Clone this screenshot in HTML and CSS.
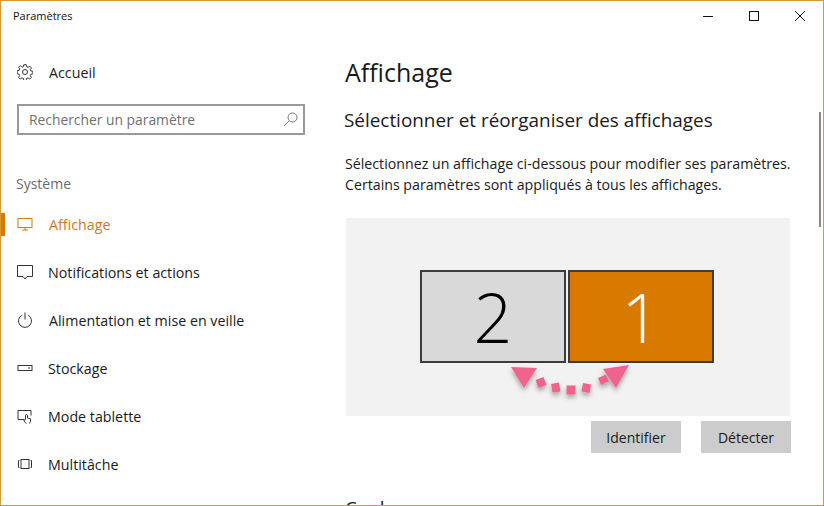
FILE: index.html
```html
<!DOCTYPE html>
<html lang="fr">
<head>
  <meta charset="UTF-8">
  <title>Paramètres</title>
  <meta name="viewport" content="width=device-width,initial-scale=1">
  <link rel="stylesheet" href="styles.css">
</head>
<body>
  <div class="window">
    <div class="titlebar">
      <span class="app-title">Paramètres</span>
      <div class="win-btns">
        <span class="win-btn"><svg width="12" height="12" viewBox="0 0 12 12"><path d="M1 6.500h10" stroke="#111" fill="none"/></svg></span>
        <span class="win-btn"><svg width="12" height="12" viewBox="0 0 12 12"><rect x="1.500" y="1.500" width="9" height="9" stroke="#111" fill="none"/></svg></span>
        <span class="win-btn"><svg width="12" height="12" viewBox="0 0 12 12"><path d="M1 1l10 10M11 1L1 11" stroke="#111" fill="none"/></svg></span>
      </div>
    </div>
    <div class="content">
      <nav class="sidebar">
        <div class="nav-item home">
          <svg class="nav-icon" width="16" height="16" viewBox="0 0 16 16" fill="none" stroke="#333"><circle cx="8" cy="8" r="2.500"/><path d="M6.800.7h2.400l.4 2 1.400.6 1.700-1.100 1.700 1.700-1.100 1.700.6 1.400 2 .4v2.400l-2 .4-.6 1.400 1.100 1.700-1.700 1.700-1.700-1.100-1.400.6-.4 2H6.800l-.4-2-1.400-.6-1.700 1.100-1.700-1.700 1.100-1.700-.6-1.400-2-.4V6.800l2-.4.6-1.400-1.100-1.700 1.700-1.700L5 3.300l1.400-.6z"/></svg>
          <span>Accueil</span>
        </div>
        <div class="search">
          <span>Rechercher un paramètre</span>
          <svg width="15" height="15" viewBox="0 0 15 15" fill="none" stroke="#777"><circle cx="9.500" cy="5.500" r="4.500"/><path d="M6.200 8.800L1 14"/></svg>
        </div>
        <div class="nav-group">Système</div>
        <div class="nav-item active">
          <svg class="nav-icon" width="16" height="16" viewBox="0 0 16 16" fill="none" stroke="#d87a00"><rect x="1" y="2.500" width="14" height="9"/><path d="M8 11.500V14M5 14h6"/></svg>
          <span>Affichage</span>
        </div>
        <div class="nav-item">
          <svg class="nav-icon" width="16" height="16" viewBox="0 0 16 16" fill="none" stroke="#333"><path d="M.5 1.500h15v11h-5.500L8 15l-2-2.500H.5z"/></svg>
          <span class="tight">Notifications et actions</span>
        </div>
        <div class="nav-item">
          <svg class="nav-icon" width="16" height="16" viewBox="0 0 16 16" fill="none" stroke="#333"><path d="M4.800 3.200a6.500 6.500 0 1 0 6.400 0"/><path d="M8 .5v7"/></svg>
          <span>Alimentation et mise en veille</span>
        </div>
        <div class="nav-item">
          <svg class="nav-icon" width="16" height="16" viewBox="0 0 16 16" fill="none" stroke="#333"><rect x="1" y="5.500" width="14" height="5"/><path d="M11 8h2"/></svg>
          <span class="tight">Stockage</span>
        </div>
        <div class="nav-item">
          <svg class="nav-icon" width="16" height="16" viewBox="0 0 16 16" fill="none" stroke="#333"><path d="M7 11.500H1v-9h13v5"/><path d="M9.500 15.500c-1.500-1-2.500-2-2.500-3.500l1.500-.5V7.500a1 1 0 0 1 2 0V10l3 .8v2.500l-1 2.200"/></svg>
          <span class="tight">Mode tablette</span>
        </div>
        <div class="nav-item">
          <svg class="nav-icon" width="16" height="16" viewBox="0 0 16 16" fill="none" stroke="#333"><rect x="4" y="3.500" width="8" height="9"/><path d="M2.500 4.500h-1v7h1M13.500 4.500h1v7h-1"/></svg>
          <span class="tight">Multitâche</span>
        </div>
      </nav>
      <main class="main">
        <h1>Affichage</h1>
        <h2>Sélectionner et réorganiser des affichages</h2>
        <p class="intro">Sélectionnez un affichage ci-dessous pour modifier ses paramètres.<br>Certains paramètres sont appliqués à tous les affichages.</p>
        <div class="canvas">
          <div class="monitor grey">2</div>
          <div class="monitor orange">1</div>
          <svg class="swap-arrow" width="130" height="40" viewBox="0 0 130 40">
            <defs>
              <filter id="soft" x="-20%" y="-20%" width="140%" height="170%"><feDropShadow dx="0" dy="3" stdDeviation="2.500" flood-color="#000" flood-opacity=".35"/></filter>
            </defs>
            <g fill="#f0648c" filter="url(#soft)">
              <path d="M5 3l26 1-13 20z"/>
              <path d="M123 1L97 5l13 19z"/>
              <path d="M29.500 16l8-3 3 8-8 3zM45 20l8-1.500 1.500 9-8 1zM60.500 21.500h9v9h-9zM77 19l8 1.500-1.500 8.500-8-1.500zM92 14l8-3.500 3 7-8 3.500z"/>
            </g>
          </svg>
        </div>
        <div class="actions">
          <button class="btn">Identifier</button>
          <button class="btn">Détecter</button>
        </div>
        <h2 class="next">Couleur</h2>
      </main>
      <div class="scrollbar"></div>
    </div>
  </div>
</body>
</html>
```

FILE: styles.css
```css
html, body {
  margin: 0;
  height: 100%;
  overflow: hidden;
}
body {
  background: #fff;
  color: #1a1a1a;
  font-family: 'Open Sans', 'Noto Sans', sans-serif;
  font-size: 14px;
}
.window {
  box-sizing: border-box;
  width: 824px;
  height: 506px;
  border: 1px solid #d9992f;
  overflow: hidden;
  display: flex;
  flex-direction: column;
}
.titlebar {
  flex: none;
  height: 29px;
  display: flex;
  justify-content: space-between;
  align-items: center;
  padding-left: 12px;
}
.app-title {
  font-size: 11px;
  color: #111;
}
.win-btns {
  display: flex;
}
.win-btn {
  width: 46px;
  display: flex;
  justify-content: center;
}
.content {
  flex: 1;
  display: flex;
  min-height: 0;
}
.sidebar {
  flex: none;
  width: 344px;
  box-sizing: border-box;
}
.nav-item {
  height: 48px;
  display: flex;
  align-items: center;
  gap: 16px;
  padding-left: 16px;
  font-size: 14.250px;
  color: #1a1a1a;
}
.nav-item .tight {
  margin-left: -1px;
}
.nav-icon {
  flex: none;
}
.home {
  margin-top: 18px;
}
.search {
  box-sizing: border-box;
  width: 288px;
  height: 31px;
  margin: 8px 0 0 16px;
  border: 2px solid #999;
  display: flex;
  align-items: center;
  justify-content: space-between;
  padding: 0 5px 0 10px;
  color: #707070;
  font-size: 13.850px;
}
.nav-group {
  margin: 39px 0 0 15px;
  height: 20px;
  line-height: 20px;
  color: #6b6b6b;
}
.active {
  margin-top: 6px;
  color: #d0781a;
  position: relative;
}
.active::before {
  content: "";
  position: absolute;
  left: 0;
  top: 13px;
  width: 4px;
  height: 23px;
  background: #d87a00;
}
.main {
  flex: 1;
  min-width: 0;
  display: flex;
  flex-direction: column;
}
h1 {
  flex: none;
  margin: 23px 0 0;
  height: 38px;
  line-height: 38px;
  font-size: 25px;
  font-weight: 400;
  color: #1a1a1a;
}
h2 {
  flex: none;
  margin: 15px 0 0 -1px;
  height: 28px;
  line-height: 28px;
  font-size: 18.900px;
  font-weight: 400;
  color: #1a1a1a;
}
.intro {
  flex: none;
  margin: 19px 0 0;
  font-size: 14.200px;
  line-height: 21px;
}
.canvas {
  flex: none;
  position: relative;
  box-sizing: border-box;
  width: 444px;
  height: 198px;
  margin: 23px 0 0 1px;
  padding: 52px 2px 0 0;
  background: #f2f2f2;
  display: flex;
  justify-content: center;
  gap: 2px;
  align-items: flex-start;
}
.monitor {
  box-sizing: border-box;
  width: 146px;
  height: 93px;
  border: 2px solid #3c3c3c;
  display: flex;
  align-items: center;
  justify-content: center;
  font-weight: 300;
  font-size: 68px;
}
.grey {
  background: #d9d9d9;
  color: #000;
}
.orange {
  background: #d87a00;
  color: #fff;
}
.swap-arrow {
  position: absolute;
  left: 160px;
  top: 146px;
}
.actions {
  flex: none;
  display: flex;
  justify-content: flex-end;
  gap: 20px;
  width: 446px;
  margin-top: 5px;
}
.btn {
  width: 90px;
  height: 32px;
  border: none;
  padding: 0;
  background: #cccccc;
  color: #1a1a1a;
  font-family: inherit;
  font-size: 14px;
}
.next {
  margin: 41px 0 0 0;
}
.scrollbar {
  flex: none;
  width: 2px;
  height: 115px;
  margin: 82px 2px 0 0;
  background: #8a8a8a;
}
```
